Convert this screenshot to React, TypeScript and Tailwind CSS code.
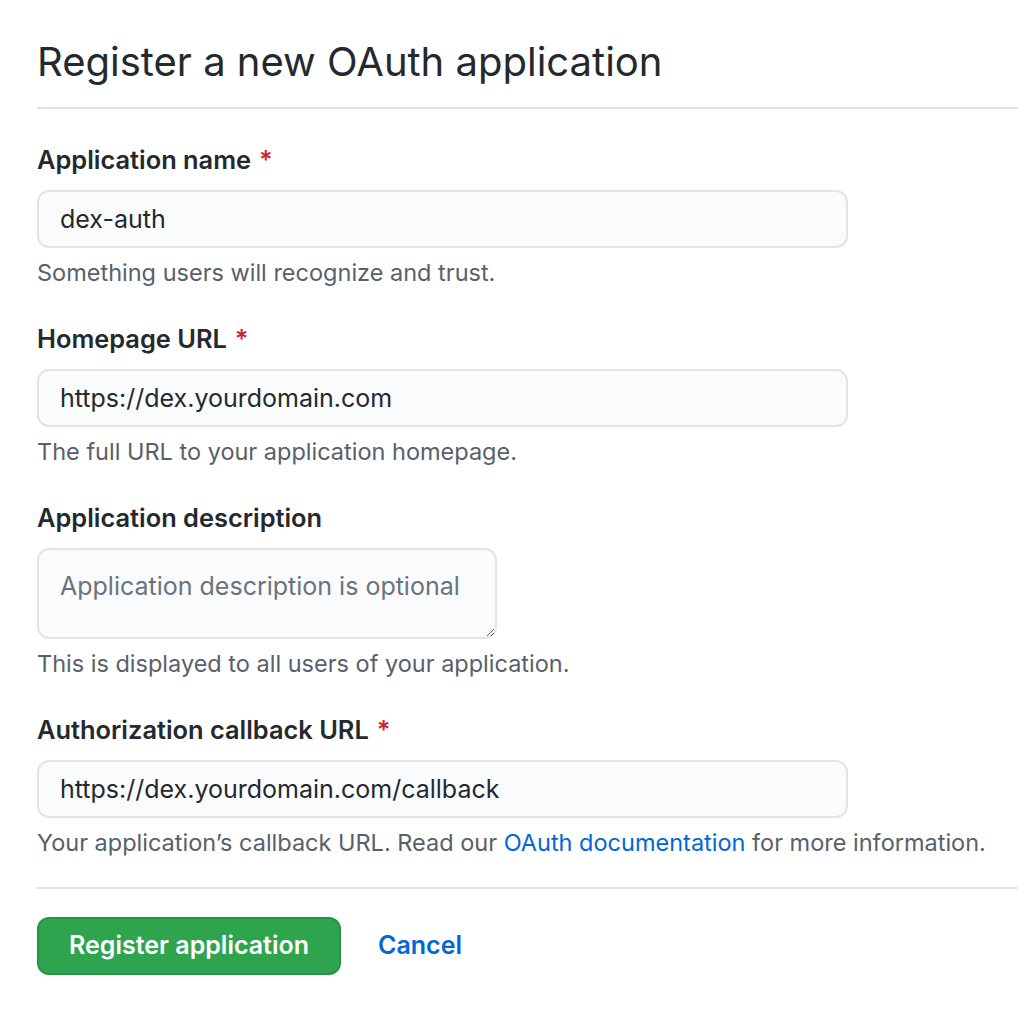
import { useState } from "react";

function Field({
  label,
  required,
  value,
  help,
}: {
  label: string;
  required?: boolean;
  value: string;
  help: React.ReactNode;
}) {
  const [v, setV] = useState(value);
  return (
    <div className="mt-[35px]">
      <label className="block text-[25.4px] font-semibold leading-[32px] text-[#24292e]">
        {label}
        {required && <span className="ml-[8px] text-[#cb2431]">*</span>}
      </label>
      <input
        type="text"
        value={v}
        onChange={(e) => setV(e.target.value)}
        className="mt-[14px] block h-[58px] w-[811px] rounded-[12px] border-2 border-[#e1e4e8] bg-[#fafbfc] px-[21px] text-[25px] text-[#24292e] outline-none"
      />
      <p className="mt-[10px] text-[23.5px] leading-[30px] text-[#586069]">{help}</p>
    </div>
  );
}

export default function App() {
  return (
    <div
      className="min-h-screen bg-white pl-[37px] pt-[37px]"
      style={{ fontFamily: "Inter, 'Liberation Sans', sans-serif" }}
    >
      <h1 className="text-[40px] font-normal leading-[50px] text-[#24292e]">
        Register a new OAuth application
      </h1>
      <div className="mt-[20px] border-b-2 border-[#e1e4e8]" />

      <Field
        label="Application name"
        required
        value="dex-auth"
        help="Something users will recognize and trust."
      />
      <Field
        label="Homepage URL"
        required
        value="https://dex.yourdomain.com"
        help="The full URL to your application homepage."
      />

      <div className="mt-[35px]">
        <label className="block text-[25.4px] font-semibold leading-[32px] text-[#24292e]">
          Application description
        </label>
        <textarea
          placeholder="Application description is optional"
          className="mt-[14px] block h-[91px] w-[460px] rounded-[12px] border-2 border-[#e1e4e8] bg-[#fafbfc] px-[21px] py-[18px] text-[25px] text-[#24292e] outline-none placeholder:text-[#6a737d]"
        />
        <p className="mt-[10px] text-[23.5px] leading-[30px] text-[#586069]">
          This is displayed to all users of your application.
        </p>
      </div>

      <Field
        label="Authorization callback URL"
        required
        value="https://dex.yourdomain.com/callback"
        help={
          <>
            Your application’s callback URL. Read our{" "}
            <a href="#" className="text-[#0366d6]">
              OAuth documentation
            </a>{" "}
            for more information.
          </>
        }
      />

      <div className="mt-[29px] border-b-2 border-[#e1e4e8]" />

      <div className="mt-[28px] flex items-center gap-[37px]">
        <button className="h-[58px] w-[304px] rounded-[12px] border-2 border-[#279445] bg-[#2ea44f] text-[25px] font-semibold text-white">
          Register application
        </button>
        <a href="#" className="text-[25px] font-semibold text-[#0366d6]">
          Cancel
        </a>
      </div>
    </div>
  );
}
